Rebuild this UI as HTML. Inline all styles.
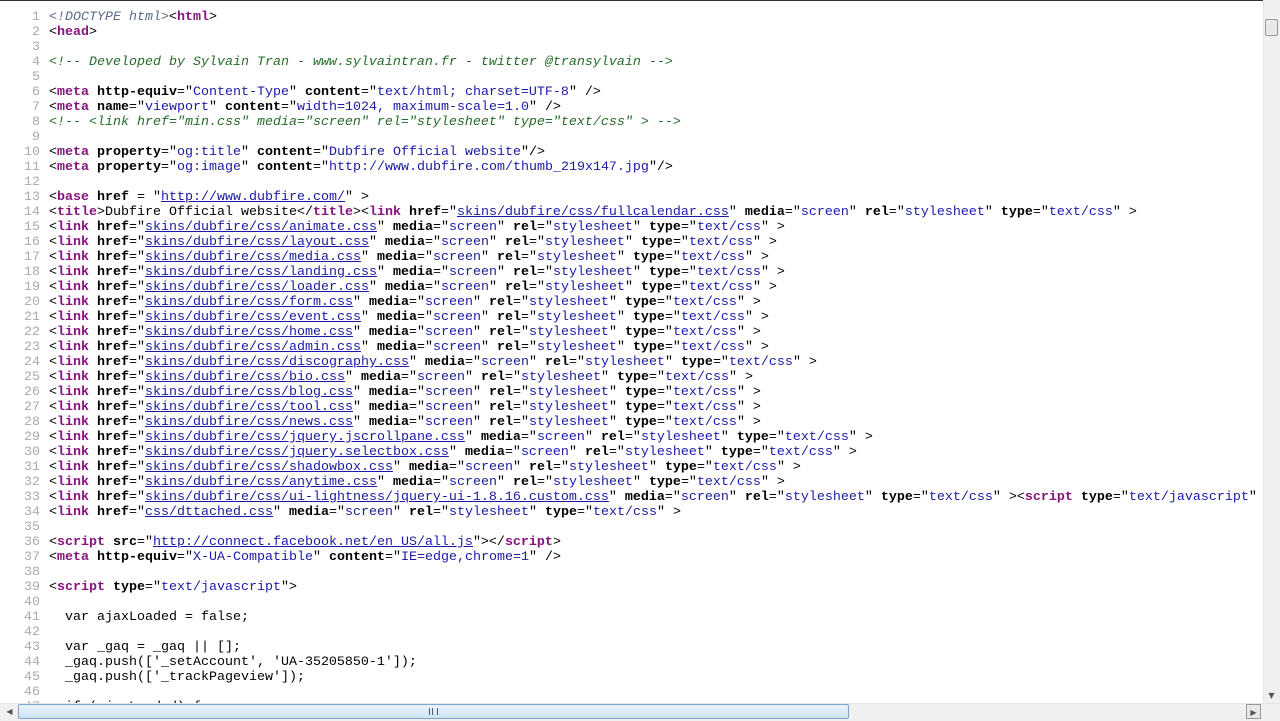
<!DOCTYPE html>
<html><head><style>
html,body{margin:0;padding:0;background:#fff;overflow:hidden;width:1280px;height:720px}
#top{position:absolute;left:0;top:0;width:1280px;height:1px;background:#333}
#src{position:absolute;left:0;top:10px;margin:0;font-family:"Liberation Mono",monospace;font-size:13.33px;line-height:15px;color:#000;white-space:pre}
.n{display:inline-block;width:40px;text-align:right;color:#aaa;margin-right:9px}
.t{color:#881280;font-weight:bold}
.a{font-weight:bold}
.v{color:#1a1aa6}
.l{color:#1a1aa6;text-decoration:underline}
.c{color:#236e25;font-style:italic}
.d{color:#5a6a8a;font-style:italic}
#vs{position:absolute;left:1263px;top:0;width:17px;height:703px;background:#f0f0f0;border-left:1px solid #e6e6e6}
#vt{position:absolute;left:1265px;top:19px;width:13px;height:17px;background:#e8e8e8;border:1px solid #999;border-radius:2px;box-sizing:border-box}
#hs{position:absolute;left:0;top:703px;width:1280px;height:17px;background:#f0f0f0;border-top:1px solid #e6e6e6}
#ht{position:absolute;left:18px;top:704px;width:831px;height:15px;background:linear-gradient(#eaf4fc,#cfe3f5);border:1px solid #7fa5cc;border-radius:2px;box-sizing:border-box}
.btn{position:absolute;width:15px;height:15px;font:8px "DejaVu Sans",sans-serif;color:#555;text-align:center;line-height:15px;box-sizing:border-box}
</style></head><body>
<div id="top"></div>
<pre id="src"><span class="n">1</span><span class="d">&lt;!DOCTYPE html&gt;</span>&lt;<span class="t">html</span>&gt;
<span class="n">2</span>&lt;<span class="t">head</span>&gt;
<span class="n">3</span>
<span class="n">4</span><span class="c">&lt;!-- Developed by Sylvain Tran - www.sylvaintran.fr - twitter @transylvain --&gt;</span>
<span class="n">5</span>
<span class="n">6</span>&lt;<span class="t">meta</span> <span class="a">http-equiv</span>="<span class="v">Content-Type</span>" <span class="a">content</span>="<span class="v">text/html; charset=UTF-8</span>" /&gt;
<span class="n">7</span>&lt;<span class="t">meta</span> <span class="a">name</span>="<span class="v">viewport</span>" <span class="a">content</span>="<span class="v">width=1024, maximum-scale=1.0</span>" /&gt;
<span class="n">8</span><span class="c">&lt;!-- &lt;link href="min.css" media="screen" rel="stylesheet" type="text/css" &gt; --&gt;</span>
<span class="n">9</span>
<span class="n">10</span>&lt;<span class="t">meta</span> <span class="a">property</span>="<span class="v">og:title</span>" <span class="a">content</span>="<span class="v">Dubfire Official website</span>"/&gt;
<span class="n">11</span>&lt;<span class="t">meta</span> <span class="a">property</span>="<span class="v">og:image</span>" <span class="a">content</span>="<span class="v">http://www.dubfire.com/thumb_219x147.jpg</span>"/&gt;
<span class="n">12</span>
<span class="n">13</span>&lt;<span class="t">base</span> <span class="a">href</span> = "<span class="l">http://www.dubfire.com/</span>" &gt;
<span class="n">14</span>&lt;<span class="t">title</span>&gt;Dubfire Official website&lt;/<span class="t">title</span>&gt;&lt;<span class="t">link</span> <span class="a">href</span>="<span class="l">skins/dubfire/css/fullcalendar.css</span>" <span class="a">media</span>="<span class="v">screen</span>" <span class="a">rel</span>="<span class="v">stylesheet</span>" <span class="a">type</span>="<span class="v">text/css</span>" &gt;
<span class="n">15</span>&lt;<span class="t">link</span> <span class="a">href</span>="<span class="l">skins/dubfire/css/animate.css</span>" <span class="a">media</span>="<span class="v">screen</span>" <span class="a">rel</span>="<span class="v">stylesheet</span>" <span class="a">type</span>="<span class="v">text/css</span>" &gt;
<span class="n">16</span>&lt;<span class="t">link</span> <span class="a">href</span>="<span class="l">skins/dubfire/css/layout.css</span>" <span class="a">media</span>="<span class="v">screen</span>" <span class="a">rel</span>="<span class="v">stylesheet</span>" <span class="a">type</span>="<span class="v">text/css</span>" &gt;
<span class="n">17</span>&lt;<span class="t">link</span> <span class="a">href</span>="<span class="l">skins/dubfire/css/media.css</span>" <span class="a">media</span>="<span class="v">screen</span>" <span class="a">rel</span>="<span class="v">stylesheet</span>" <span class="a">type</span>="<span class="v">text/css</span>" &gt;
<span class="n">18</span>&lt;<span class="t">link</span> <span class="a">href</span>="<span class="l">skins/dubfire/css/landing.css</span>" <span class="a">media</span>="<span class="v">screen</span>" <span class="a">rel</span>="<span class="v">stylesheet</span>" <span class="a">type</span>="<span class="v">text/css</span>" &gt;
<span class="n">19</span>&lt;<span class="t">link</span> <span class="a">href</span>="<span class="l">skins/dubfire/css/loader.css</span>" <span class="a">media</span>="<span class="v">screen</span>" <span class="a">rel</span>="<span class="v">stylesheet</span>" <span class="a">type</span>="<span class="v">text/css</span>" &gt;
<span class="n">20</span>&lt;<span class="t">link</span> <span class="a">href</span>="<span class="l">skins/dubfire/css/form.css</span>" <span class="a">media</span>="<span class="v">screen</span>" <span class="a">rel</span>="<span class="v">stylesheet</span>" <span class="a">type</span>="<span class="v">text/css</span>" &gt;
<span class="n">21</span>&lt;<span class="t">link</span> <span class="a">href</span>="<span class="l">skins/dubfire/css/event.css</span>" <span class="a">media</span>="<span class="v">screen</span>" <span class="a">rel</span>="<span class="v">stylesheet</span>" <span class="a">type</span>="<span class="v">text/css</span>" &gt;
<span class="n">22</span>&lt;<span class="t">link</span> <span class="a">href</span>="<span class="l">skins/dubfire/css/home.css</span>" <span class="a">media</span>="<span class="v">screen</span>" <span class="a">rel</span>="<span class="v">stylesheet</span>" <span class="a">type</span>="<span class="v">text/css</span>" &gt;
<span class="n">23</span>&lt;<span class="t">link</span> <span class="a">href</span>="<span class="l">skins/dubfire/css/admin.css</span>" <span class="a">media</span>="<span class="v">screen</span>" <span class="a">rel</span>="<span class="v">stylesheet</span>" <span class="a">type</span>="<span class="v">text/css</span>" &gt;
<span class="n">24</span>&lt;<span class="t">link</span> <span class="a">href</span>="<span class="l">skins/dubfire/css/discography.css</span>" <span class="a">media</span>="<span class="v">screen</span>" <span class="a">rel</span>="<span class="v">stylesheet</span>" <span class="a">type</span>="<span class="v">text/css</span>" &gt;
<span class="n">25</span>&lt;<span class="t">link</span> <span class="a">href</span>="<span class="l">skins/dubfire/css/bio.css</span>" <span class="a">media</span>="<span class="v">screen</span>" <span class="a">rel</span>="<span class="v">stylesheet</span>" <span class="a">type</span>="<span class="v">text/css</span>" &gt;
<span class="n">26</span>&lt;<span class="t">link</span> <span class="a">href</span>="<span class="l">skins/dubfire/css/blog.css</span>" <span class="a">media</span>="<span class="v">screen</span>" <span class="a">rel</span>="<span class="v">stylesheet</span>" <span class="a">type</span>="<span class="v">text/css</span>" &gt;
<span class="n">27</span>&lt;<span class="t">link</span> <span class="a">href</span>="<span class="l">skins/dubfire/css/tool.css</span>" <span class="a">media</span>="<span class="v">screen</span>" <span class="a">rel</span>="<span class="v">stylesheet</span>" <span class="a">type</span>="<span class="v">text/css</span>" &gt;
<span class="n">28</span>&lt;<span class="t">link</span> <span class="a">href</span>="<span class="l">skins/dubfire/css/news.css</span>" <span class="a">media</span>="<span class="v">screen</span>" <span class="a">rel</span>="<span class="v">stylesheet</span>" <span class="a">type</span>="<span class="v">text/css</span>" &gt;
<span class="n">29</span>&lt;<span class="t">link</span> <span class="a">href</span>="<span class="l">skins/dubfire/css/jquery.jscrollpane.css</span>" <span class="a">media</span>="<span class="v">screen</span>" <span class="a">rel</span>="<span class="v">stylesheet</span>" <span class="a">type</span>="<span class="v">text/css</span>" &gt;
<span class="n">30</span>&lt;<span class="t">link</span> <span class="a">href</span>="<span class="l">skins/dubfire/css/jquery.selectbox.css</span>" <span class="a">media</span>="<span class="v">screen</span>" <span class="a">rel</span>="<span class="v">stylesheet</span>" <span class="a">type</span>="<span class="v">text/css</span>" &gt;
<span class="n">31</span>&lt;<span class="t">link</span> <span class="a">href</span>="<span class="l">skins/dubfire/css/shadowbox.css</span>" <span class="a">media</span>="<span class="v">screen</span>" <span class="a">rel</span>="<span class="v">stylesheet</span>" <span class="a">type</span>="<span class="v">text/css</span>" &gt;
<span class="n">32</span>&lt;<span class="t">link</span> <span class="a">href</span>="<span class="l">skins/dubfire/css/anytime.css</span>" <span class="a">media</span>="<span class="v">screen</span>" <span class="a">rel</span>="<span class="v">stylesheet</span>" <span class="a">type</span>="<span class="v">text/css</span>" &gt;
<span class="n">33</span>&lt;<span class="t">link</span> <span class="a">href</span>="<span class="l">skins/dubfire/css/ui-lightness/jquery-ui-1.8.16.custom.css</span>" <span class="a">media</span>="<span class="v">screen</span>" <span class="a">rel</span>="<span class="v">stylesheet</span>" <span class="a">type</span>="<span class="v">text/css</span>" &gt;&lt;<span class="t">script</span> <span class="a">type</span>="<span class="v">text/javascript</span>"
<span class="n">34</span>&lt;<span class="t">link</span> <span class="a">href</span>="<span class="l">css/dttached.css</span>" <span class="a">media</span>="<span class="v">screen</span>" <span class="a">rel</span>="<span class="v">stylesheet</span>" <span class="a">type</span>="<span class="v">text/css</span>" &gt;
<span class="n">35</span>
<span class="n">36</span>&lt;<span class="t">script</span> <span class="a">src</span>="<span class="l">http://connect.facebook.net/en_US/all.js</span>"&gt;&lt;/<span class="t">script</span>&gt;
<span class="n">37</span>&lt;<span class="t">meta</span> <span class="a">http-equiv</span>="<span class="v">X-UA-Compatible</span>" <span class="a">content</span>="<span class="v">IE=edge,chrome=1</span>" /&gt;
<span class="n">38</span>
<span class="n">39</span>&lt;<span class="t">script</span> <span class="a">type</span>="<span class="v">text/javascript</span>"&gt;
<span class="n">40</span>
<span class="n">41</span>  var ajaxLoaded = false;
<span class="n">42</span>
<span class="n">43</span>  var _gaq = _gaq || [];
<span class="n">44</span>  _gaq.push(['_setAccount', 'UA-35205850-1']);
<span class="n">45</span>  _gaq.push(['_trackPageview']);
<span class="n">46</span>
<span class="n">47</span>  if (ajaxLoaded) {
</pre>
<div id="vs"></div>
<div class="btn" style="left:1264px;top:688px">&#9660;</div>
<div id="vt"></div>
<div id="hs"></div>
<div class="btn" style="left:2px;top:704px">&#9664;</div>
<div class="btn" style="left:1246px;top:704px;border:1px solid #999;background:#e8e8e8">&#9654;</div>
<div id="ht"><div style="position:absolute;left:410px;top:3px;width:7px;height:7px;border-left:1px solid #557;border-right:1px solid #557"><div style="margin-left:2px;width:1px;height:7px;background:#557"></div></div></div>
</body></html>
